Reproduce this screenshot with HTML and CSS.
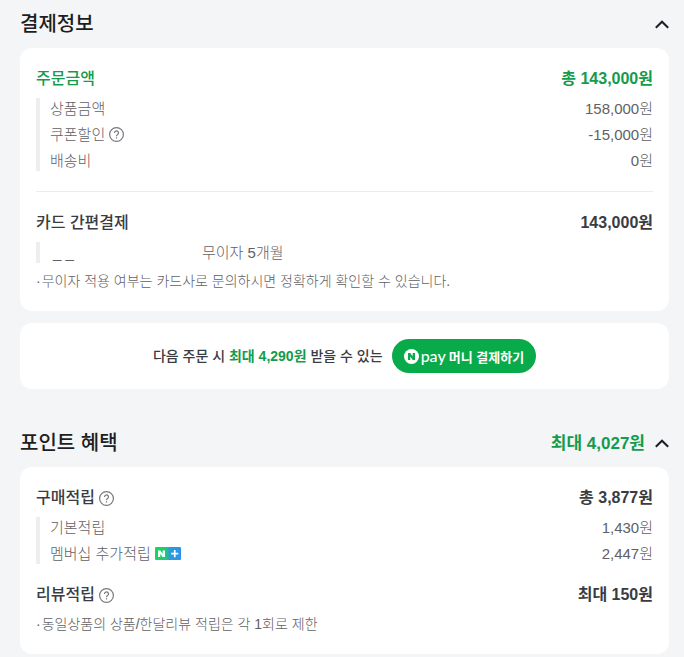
FILE: index.html
```html
<!DOCTYPE html>
<html lang="ko">

<head>
  <meta charset="UTF-8" />
  <meta name="viewport" content="width=device-width,initial-scale=1" />
  <title>결제정보</title>
  <link rel="stylesheet" href="styles.css">
</head>

<body>
  <section class="section">
    <div class="section-head">
      <h2>결제정보</h2>
      <button class="toggle" type="button" aria-label="접기" aria-expanded="true">
        <svg width="14" height="9" viewBox="0 0 14 9"><path d="M.8 7.8 7 1.7l6.2 6.1" /></svg>
      </button>
    </div>
    <div class="card">
      <div class="row total green"><h3>주문금액</h3><strong>총 143,000원</strong></div>
      <ul class="detail">
        <li class="row"><span>상품금액</span><span>158,000원</span></li>
        <li class="row">
          <span class="label">쿠폰할인
            <button class="help" type="button" aria-label="쿠폰할인 도움말">
              <svg width="15" height="15" viewBox="0 0 15 15"><circle cx="7.5" cy="7.5" r="6.9" /><path d="M5.500 6a2 2 0 1 1 3.100 1.600C7.800 8.100 7.500 8.500 7.500 9.200M7.500 10.200v1.200" /></svg>
            </button>
          </span>
          <span>-15,000원</span>
        </li>
        <li class="row"><span>배송비</span><span>0원</span></li>
      </ul>
      <hr>
      <div class="row total"><h3>카드 간편결제</h3><strong>143,000원</strong></div>
      <ul class="detail">
        <li class="method"><span class="card-name">_ _</span><span>무이자 5개월</span></li>
      </ul>
      <p class="note"><span>·</span>무이자 적용 여부는 카드사로 문의하시면 정확하게 확인할 수 있습니다.</p>
    </div>
    <div class="card promo">
      <p>다음 주문 시 <em>최대 4,290원</em> 받을 수 있는</p>
      <button class="pay-btn" type="button">
        <svg width="15" height="15" viewBox="0 0 15 15"><circle cx="7.5" cy="7.5" r="7.5" fill="#fff" /><path d="M4 4h2.300l2.400 3.500V4H11v7H8.700L6.300 7.500V11H4z" fill="#09aa49" /></svg>
        <span class="pay">pay</span>
        <span>머니 결제하기</span>
      </button>
    </div>
  </section>

  <section class="section">
    <div class="section-head">
      <h2>포인트 혜택</h2>
      <strong class="green">최대 4,027원</strong>
      <button class="toggle" type="button" aria-label="접기" aria-expanded="true">
        <svg width="14" height="9" viewBox="0 0 14 9"><path d="M.8 7.8 7 1.7l6.2 6.1" /></svg>
      </button>
    </div>
    <div class="card">
      <div class="row total">
        <h3 class="label">구매적립
          <button class="help" type="button" aria-label="구매적립 도움말">
            <svg width="15" height="15" viewBox="0 0 15 15"><circle cx="7.5" cy="7.5" r="6.9" /><path d="M5.500 6a2 2 0 1 1 3.100 1.600C7.800 8.100 7.500 8.500 7.500 9.200M7.500 10.200v1.200" /></svg>
          </button>
        </h3>
        <strong>총 3,877원</strong>
      </div>
      <ul class="detail">
        <li class="row"><span>기본적립</span><span>1,430원</span></li>
        <li class="row">
          <span class="label">멤버십 추가적립
            <svg class="plus" width="26" height="13" viewBox="0 0 26 13">
              <defs>
                <linearGradient id="plusBg">
                  <stop offset="0" stop-color="#18d65c" />
                  <stop offset=".42" stop-color="#1fc878" />
                  <stop offset=".58" stop-color="#2a9bdd" />
                  <stop offset="1" stop-color="#2c92ec" />
                </linearGradient>
              </defs>
              <rect width="26" height="13" rx="1" fill="url(#plusBg)" />
              <path d="M3 3.500h2.300l2.400 3.200V3.500H10v6.500H7.700L5.300 6.800V10H3zM18.900 3h1.700v2.800h2.700v1.700h-2.700v2.700h-1.700V7.500h-2.700V5.800h2.700z" fill="#fff" />
            </svg>
          </span>
          <span>2,447원</span>
        </li>
      </ul>
      <div class="row total review">
        <h3 class="label">리뷰적립
          <button class="help" type="button" aria-label="리뷰적립 도움말">
            <svg width="15" height="15" viewBox="0 0 15 15"><circle cx="7.5" cy="7.5" r="6.9" /><path d="M5.500 6a2 2 0 1 1 3.100 1.600C7.800 8.100 7.500 8.500 7.500 9.200M7.500 10.200v1.200" /></svg>
          </button>
        </h3>
        <strong>최대 150원</strong>
      </div>
      <p class="note"><span>·</span>동일상품의 상품/한달리뷰 적립은 각 1회로 제한</p>
    </div>
  </section>
</body>

</html>
```
FILE: styles.css
```css
* {
  box-sizing: border-box;
  margin: 0;
  padding: 0;
}

body {
  font-family: "Liberation Sans", "Noto Sans CJK KR", sans-serif;
  font-size: 15px;
  line-height: 21px;
  color: #3a3c42;
  background: #f3f5f7;
  padding: 10px 15px 0 20px;
}

button {
  border: none;
  background: none;
  font-family: inherit;
  cursor: pointer;
}

svg {
  display: block;
}

ul {
  list-style: none;
}

.section + .section {
  margin-top: 40px;
}

.section-head {
  display: flex;
  align-items: center;
  height: 28px;
  margin-bottom: 10px;
}

.section-head h2 {
  flex: 1;
  font-size: 20px;
  line-height: 28px;
  font-weight: 500;
  color: #1e1e20;
}

.section-head strong {
  font-size: 17px;
  margin-right: 10px;
}

.toggle path {
  fill: none;
  stroke: #1e1e23;
  stroke-width: 2;
}

.card {
  background: #fff;
  border-radius: 12px;
  padding: 20px 16px;
}

.row {
  display: flex;
  justify-content: space-between;
}

.total {
  font-size: 16px;
  line-height: 22px;
}

.total h3 {
  font-size: 16px;
  font-weight: 500;
}

.green,
.promo em {
  color: #149b4b;
}

.label {
  display: flex;
  align-items: center;
  gap: 4px;
}

.help path,
.help circle {
  fill: none;
  stroke: #77797d;
  stroke-width: 1.2;
}

.detail {
  display: flex;
  flex-direction: column;
  gap: 5px;
  margin-top: 8px;
  padding-left: 10px;
  border-left: 4px solid #eee;
  font-weight: 300;
  color: #5f6165;
}

hr {
  border: none;
  border-top: 1px solid #ebecef;
  margin: 20px 0;
}

.method {
  display: flex;
}

.card-name {
  width: 152px;
  padding-left: 3px;
}

.note {
  display: flex;
  gap: 1px;
  margin-top: 8px;
  font-size: 14px;
  line-height: 20px;
  font-weight: 300;
  color: #5f6165;
}

.promo {
  display: flex;
  align-items: center;
  justify-content: center;
  gap: 9px;
  margin-top: 12px;
  padding: 16px;
  font-size: 14px;
  font-weight: 500;
}

.promo em {
  font-style: normal;
  font-weight: 700;
}

.pay-btn {
  display: flex;
  align-items: center;
  height: 34px;
  padding: 0 12px;
  border-radius: 17px;
  background: #09aa49;
  color: #fff;
  font-size: 13px;
  font-weight: 700;
}

.pay {
  margin: 0 3px 0 2px;
  font-family: Lato, sans-serif;
  font-size: 16px;
  line-height: 16px;
  font-weight: 500;
}

.review {
  margin-top: 20px;
}
```
